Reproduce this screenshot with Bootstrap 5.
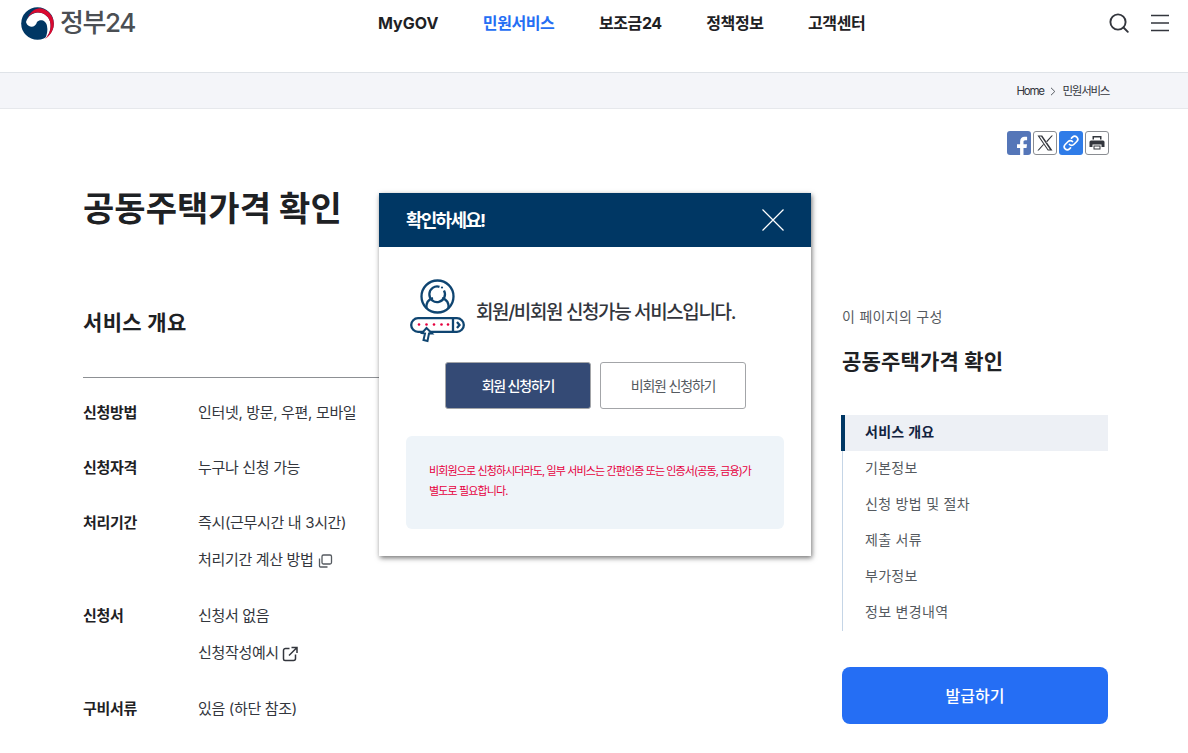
<!DOCTYPE html>
<html lang="ko">
<head>
<meta charset="utf-8">
<title>공동주택가격 확인</title>
<link href="https://cdn.jsdelivr.net/npm/bootstrap@5.3.0/dist/css/bootstrap.min.css" rel="stylesheet">
<style>
html,body{height:753px;overflow:hidden}
body{font-family:Inter,"Noto Sans CJK KR",sans-serif;color:#1e2124;background:#fff;position:relative}
a{text-decoration:none;color:inherit}
.gnb-bar{height:73px;padding:0 19px 0 21px;border-bottom:1px solid #dfe3e8;align-items:flex-start}
.brand{height:46px;gap:6px;width:357px}
.brand-name{font-size:26px;color:#4b4f54;letter-spacing:-1.4px;line-height:46px;font-weight:500}
.gnb-links{gap:44.5px;height:46px;font-size:16px;font-weight:700;color:#1e2124;letter-spacing:-.4px}
.gnb-links .latin{letter-spacing:0}
.gnb-links .on{color:#256ef4}
.gnb-tools{gap:22px;height:46px}
.crumb-bar{height:36px;background:#f4f5f9;border-bottom:1px solid #e6e8ec;padding:2px 79px 0 0;font-size:11.5px;letter-spacing:-1.3px;color:#33363d;gap:6.5px}
.page-wrap{padding:22px 79px 0 83px}
.share-row{gap:2px;height:24px}
.share-btn{width:24px;height:24px;border-radius:3px}
.share-fb{background:#5576b8}
.share-line{border:1px solid #8a8d92;background:#fff}
.share-link{background:#2f7ce8}
.page-title{font-size:34px;font-weight:700;letter-spacing:.05px;line-height:48px;margin:30px 0 0;color:#1e2124}
.left-col{width:759px}
.sec-title{font-size:21px;font-weight:700;margin:0 40px 0 0;line-height:30px;letter-spacing:.35px;padding-top:75px;padding-bottom:39px;border-bottom:1px solid #8d9094;color:#1e2124}
.info-list{margin:0;padding-top:16px;font-size:15px;line-height:37px;letter-spacing:-.33px;color:#33363d}
.info-row{margin-bottom:18px}
.info-row:nth-child(n+3){margin-bottom:19px}
.info-row dt{width:115px;flex:none;font-weight:700;color:#1e2124}
.info-row dd{margin:0}
.info-icon{margin-left:3px;vertical-align:-4px}
.side-col{width:266px;padding-top:152px}
.side-kicker{font-size:14px;color:#555a60;line-height:20px;letter-spacing:.3px}
.side-title{font-size:21px;font-weight:700;letter-spacing:.2px;margin:20px 0 0;line-height:30px;color:#1e2124}
.side-nav{margin-top:38px;border-left:1px solid #c5d5e6;font-size:14px;letter-spacing:.3px;color:#555a60}
.side-nav a{height:36px;padding:0 0 4px 22px;display:flex;align-items:center}
.side-nav a.now{background:#edf0f5;color:#12233f;font-weight:700;border-left:4px solid #003764;margin-left:-2px;padding-left:20px}
.issue-btn{height:57px;margin-top:36px;background:#256ef4;border:0;border-radius:8px;font-size:16px;font-weight:500;color:#fff}
.notice-modal{position:absolute;left:379px;top:193px;width:432px;height:363px;background:#fff;box-shadow:1px 2px 5px rgba(0,0,0,.55)}
.notice-head{height:54px;background:#003764;color:#fff;padding:0 27px 0 27px}
.notice-head h2{font-size:18px;font-weight:700;letter-spacing:-1.75px;margin:2px 0 0}
.notice-msg{padding:32px 0 0 31px;gap:11px;font-size:19px;font-weight:500;letter-spacing:-1.37px;color:#33363d}
.notice-msg span{padding-top:3px}
.notice-btns{gap:9px;margin-top:18px;padding-left:1px}
.notice-btn{width:146px;height:47px;border-radius:3px;font-size:14px;letter-spacing:-1.2px;padding:0;line-height:1;border:1px solid #a3a5a8}
.notice-btn.go{background:#344a75;color:#fff;font-weight:500}
.notice-btn.alt{background:#fff;color:#555a60}
.notice-note{margin:27px 27px 0;height:93px;background:#eef4f9;border-radius:6px;padding:25px 23px 0;color:#e6003e;font-size:11px;line-height:20px;letter-spacing:-.88px;white-space:nowrap}
</style>
</head>
<body>
<header class="gnb-bar d-flex">
  <a class="brand d-flex align-items-center" href="#">
    <svg width="33" height="33" viewBox="0 0 33 33" aria-hidden="true">
      <circle cx="16.5" cy="16.5" r="16.3" fill="#003764"/>
      <path d="M5 15C7 9 12 5.500 17 5.500C23 5.500 29 10 29.500 17C30 23 28 28 24 32C26 28 27 23 26 19C25 13 19 12 16 15C15 19 11 21 8 19C6.500 18 5.500 17 5 15z" fill="#fff"/>
      <path d="M6 12C9 5 14 1.200 19 1.200C27 2 32.800 9 32.800 17C32.800 23 29 29 24 32C28 28 30 23 29.500 17C29 10 23 5.500 17 5.500C12 5.500 8 8 6 12z" fill="#d9092f"/>
    </svg>
    <span class="brand-name">정부24</span>
  </a>
  <nav class="gnb-links d-flex align-items-center">
    <a class="latin" href="#">MyGOV</a><a class="on" href="#">민원서비스</a><a href="#">보조금24</a><a href="#">정책정보</a><a href="#">고객센터</a>
  </nav>
  <div class="gnb-tools d-flex align-items-center ms-auto">
    <svg width="20" height="20" viewBox="0 0 20 20" fill="none" stroke="#33363d" stroke-width="1.900" aria-label="검색" role="img"><circle cx="9" cy="9" r="7.600"/><path d="M14.500 14.500l4.300 4.300" stroke-linecap="round"/></svg>
    <svg width="18" height="18" viewBox="0 0 18 18" fill="none" stroke="#33363d" stroke-width="1.700" aria-label="메뉴" role="img"><path d="M0 1.500h18M0 9h18M0 16.500h18"/></svg>
  </div>
</header>
<div class="crumb-bar d-flex align-items-center justify-content-end">
  <a href="#">Home</a>
  <svg width="6" height="9" viewBox="0 0 6 9" fill="none" stroke="#555a60" aria-hidden="true"><path d="M1 .8l3.800 3.700L1 8.200"/></svg>
  <a href="#">민원서비스</a>
</div>
<main class="page-wrap">
  <div class="share-row d-flex justify-content-end">
    <a class="share-btn share-fb d-block overflow-hidden" href="#" aria-label="페이스북"><svg width="24" height="24" viewBox="0 0 24 24"><path d="M16.500 24v-9h3l.5-3.700h-3.500V9c0-1.100.4-1.800 1.900-1.800h1.700V3.900c-.4 0-1.400-.1-2.500-.1-2.700 0-4.500 1.600-4.500 4.700v2.800H10V15h3.100v9z" fill="#fff"/></svg></a>
    <a class="share-btn share-line d-flex align-items-center justify-content-center" href="#" aria-label="X"><svg width="16" height="16" viewBox="0 0 16 16"><path d="M.5.500h4.700l10.300 15h-4.700zM2.500 1.500l8.800 13h1.600L4.100 1.500zM14.500.500l-5.700 6.300.8 1L15.900.500zM6.500 8.700L.4 15.500h1.400l5.300-5.900z" fill="#33363d" fill-rule="evenodd"/></svg></a>
    <a class="share-btn share-link d-flex align-items-center justify-content-center" href="#" aria-label="링크"><svg width="18" height="18" viewBox="0 0 18 18" fill="none" stroke="#fff" stroke-width="1.700" stroke-linecap="round"><path d="M7.500 10.500a3 3 0 0 0 4.300 0l3-3a3 3 0 0 0-4.300-4.300l-1 1"/><path d="M10.500 7.500a3 3 0 0 0-4.300 0l-3 3a3 3 0 0 0 4.300 4.300l1-1"/></svg></a>
    <a class="share-btn share-line d-flex align-items-center justify-content-center" href="#" aria-label="인쇄"><svg width="16" height="16" viewBox="0 0 16 16" fill="#33363d"><path d="M3.500 1h9v3.500h-1.500V2.500h-6v2H3.500z"/><path d="M2 5.500h12a1.500 1.500 0 0 1 1.500 1.500v5h-3v-2.500h-9V12h-3V7A1.500 1.500 0 0 1 2 5.500z"/><path d="M4.500 10.500h7V14.500h-7zM5.500 11.500v2h5v-2z" fill-rule="evenodd"/></svg></a>
  </div>
  <div class="d-flex">
    <div class="left-col">
      <h1 class="page-title">공동주택가격 확인</h1>
      <h2 class="sec-title">서비스 개요</h2>
      <dl class="info-list">
        <div class="info-row d-flex"><dt>신청방법</dt><dd>인터넷, 방문, 우편, 모바일</dd></div>
        <div class="info-row d-flex"><dt>신청자격</dt><dd>누구나 신청 가능</dd></div>
        <div class="info-row d-flex"><dt>처리기간</dt><dd>즉시(근무시간 내 3시간)<br>처리기간 계산 방법<svg class="info-icon" width="16" height="16" viewBox="0 0 16 16" fill="none" stroke="#555a60" stroke-width="1.300" aria-hidden="true"><rect x="5" y="2" width="9.500" height="9" rx="1.500"/><path d="M2.500 5.500v7.500a1 1 0 0 0 1 1h7"/></svg></dd></div>
        <div class="info-row d-flex"><dt>신청서</dt><dd>신청서 없음<br>신청작성예시<svg class="info-icon" width="16" height="16" viewBox="0 0 16 16" fill="none" stroke="#33363d" stroke-width="1.500" aria-hidden="true"><path d="M7.500 2.500h-4a2 2 0 0 0-2 2v8.500a1.500 1.500 0 0 0 1.500 1.500h8.500a2 2 0 0 0 2-2V8.500M7 9.500l7.500-7.500M9.500 1.500h5.500V7"/></svg></dd></div>
        <div class="info-row d-flex"><dt>구비서류</dt><dd>있음 (하단 참조)</dd></div>
      </dl>
    </div>
    <aside class="side-col">
      <div class="side-kicker">이 페이지의 구성</div>
      <h2 class="side-title">공동주택가격 확인</h2>
      <nav class="side-nav">
        <a class="now" href="#">서비스 개요</a>
        <a href="#">기본정보</a>
        <a href="#">신청 방법 및 절차</a>
        <a href="#">제출 서류</a>
        <a href="#">부가정보</a>
        <a href="#">정보 변경내역</a>
      </nav>
      <button class="issue-btn w-100" type="button">발급하기</button>
    </aside>
  </div>
</main>
<section class="notice-modal" role="dialog" aria-label="확인하세요!">
  <div class="notice-head d-flex align-items-center justify-content-between">
    <h2>확인하세요!</h2>
    <svg width="22" height="22" viewBox="0 0 22 22" stroke="#fff" stroke-width="1.200" aria-label="닫기" role="img"><path d="M.5.500l21 21M21.500.500l-21 21"/></svg>
  </div>
  <div class="notice-msg d-flex align-items-center">
    <svg width="55" height="65" viewBox="0 0 55 65" fill="none" stroke="#0f4571" stroke-width="2.300" aria-hidden="true">
      <circle cx="27.500" cy="17.500" r="16"/>
      <path d="M34 11.500A7.800 7.800 0 1 1 29.500 7.800"/>
      <circle cx="32" cy="8.500" r="1.100" fill="#0f4571" stroke="none"/>
      <path d="M16.500 29c-.5-5 2-8.500 6.500-9.800M38.500 29c.5-5-2-8.500-6.500-9.800"/>
      <rect x="1.200" y="39.200" width="52.600" height="13.600" rx="6.800"/>
      <path d="M43 39.500v13M47 43l2.500 3-2.500 3"/>
      <path d="M16.500 49l5.500 5.500h-3l-1.500 7.500-4-1 1.500-6.500-3-.5z" fill="#fff" stroke-width="2"/>
      <g fill="#e6003e" stroke="none"><circle cx="9" cy="45.500" r="1.300"/><circle cx="16.500" cy="45.500" r="1.300"/><circle cx="24" cy="45.500" r="1.300"/><circle cx="31.500" cy="45.500" r="1.300"/><circle cx="38" cy="45.500" r="1.300"/></g>
    </svg>
    <span>회원/비회원 신청가능 서비스입니다.</span>
  </div>
  <div class="notice-btns d-flex justify-content-center">
    <button class="notice-btn go" type="button">회원 신청하기</button>
    <button class="notice-btn alt" type="button">비회원 신청하기</button>
  </div>
  <div class="notice-note">비회원으로 신청하시더라도, 일부 서비스는 간편인증 또는 인증서(공동, 금융)가<br>별도로 필요합니다.</div>
</section>
<script src="https://cdn.jsdelivr.net/npm/bootstrap@5.3.0/dist/js/bootstrap.bundle.min.js"></script>
</body>
</html>
